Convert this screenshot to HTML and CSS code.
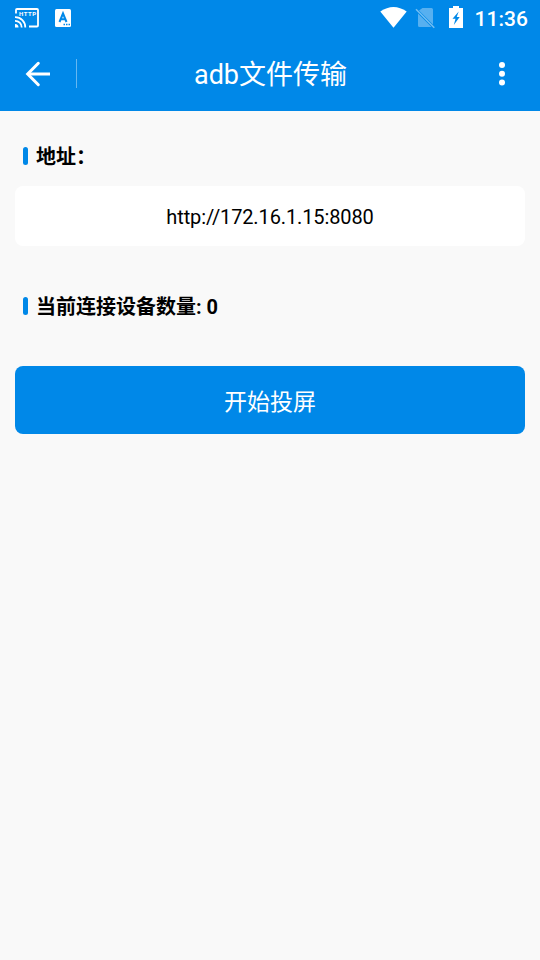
FILE: index.html
```
<!DOCTYPE html>
<html lang="zh-CN">
<head>
<meta charset="utf-8">
<title>adb文件传输</title>
<link rel="stylesheet" href="styles.css">
</head>
<body>
<header class="top">
  <div class="status">
    <svg class="cast" width="26" height="22" viewBox="0 0 26 22" fill="none" stroke="#fff" stroke-width="1.8">
      <path d="M2 6.500V3Q2 2 3 2H23Q24 2 24 3V18.500Q24 19.500 23 19.500H15"/>
      <path d="M1 10.200A10 10 0 0 1 11.300 20.500M1 13.800A6.600 6.600 0 0 1 7.700 20.500" stroke-width="1.800"/>
      <path d="M1 17A3.500 3.500 0 0 1 4.500 20.500H1Z" fill="#fff" stroke="none"/>
      <text x="5" y="8.900" class="http" textLength="17">HTTP</text>
    </svg>
    <svg class="keyboard" width="16" height="18" viewBox="0 0 16 18">
      <rect width="16" height="18" rx="1.500" fill="#fff"/>
      <path d="M4.500 13L8 4.500L11.500 13M6 10.300H10" fill="none" stroke="#0088e8" stroke-width="2"/>
      <path d="M8.500 15.500H15" stroke="#0088e8" stroke-width="1.300" stroke-dasharray="1.500 1"/>
    </svg>
    <svg class="signals" width="84" height="24" viewBox="380 5 84 24">
      <path d="M380.300 11.500Q393.500 2.500 406.700 11.500L393.500 27.800Z" fill="#fff"/>
      <path d="M422.500 8H431.500Q433 8 433 9.500V24.500L419 10.500ZM418 13.500L431.500 27H419.500Q418 27 418 25.500Z" fill="#fff" opacity=".34"/>
      <path d="M416 9.300L434.300 27.700" stroke="#fff" stroke-width="1.500" opacity=".45"/>
      <path d="M449 8H453V6H459V8H463V28H449Z" fill="#fff"/>
      <path d="M458.700 11.500L452.500 18.700H455.500L453.800 25L459.700 17H456.700Z" fill="#0088e8"/>
    </svg>
    <span class="time">11:36</span>
  </div>
  <div class="bar">
    <svg class="back" width="26" height="26" viewBox="0 0 26 26" fill="none" stroke="#fff" stroke-width="3">
      <path d="M25 13H3"/><path d="M13.300 2.300L2.700 13L13.300 23.700" stroke-linecap="round"/>
    </svg>
    <i class="divider"></i>
    <h1>adb文件传输</h1>
    <svg class="more" width="6" height="24" viewBox="0 0 6 24" fill="#fff">
      <circle cx="3" cy="3" r="3"/><circle cx="3" cy="11.700" r="3"/><circle cx="3" cy="20.400" r="3"/>
    </svg>
  </div>
</header>
<main>
  <h2><span>地址：</span></h2>
  <div class="url">http://172.16.1.15:8080</div>
  <h2 class="devices"><span>当前连接设备数量: 0</span></h2>
  <button>开始投屏</button>
</main>
</body>
</html>
```
FILE: styles.css
```
* { box-sizing: border-box; }
body {
  margin: 0;
  min-height: 960px;
  background: #f9f9f9;
  color: #000;
  font-family: Roboto, "Noto Sans CJK SC", sans-serif;
}
svg { display: block; flex: none; }
.top { height: 111px; background: #0088e8; color: #fff; }
.status { display: flex; height: 36px; padding: 0 12px 0 14px; }
.cast { margin-top: 7px; }
.http { font: 700 6px Roboto, sans-serif; fill: #fff; stroke: none; }
.keyboard { margin: 9px 0 0 15px; }
.signals { margin: 5px 0 0 auto; }
.time { margin-left: 10px; font-size: 21px; font-weight: 500; line-height: 38px; letter-spacing: .05px; }
.bar {
  display: grid;
  grid-template-columns: 26px 1px 1fr 6px;
  align-items: center;
  height: 75px;
  padding: 0 35px 0 25px;
}
.divider { justify-self: end; width: 1px; height: 29px; margin-right: -25px; background: rgba(255,255,255,.4); }
h1 { margin: 0 0 0 -17px; padding: 2px 0 0 7px; font-size: 27px; line-height: 40px; font-weight: 400; text-align: center; }
main { padding: 30px 15px; }
h2 {
  display: flex;
  align-items: center;
  height: 30px;
  margin: 0;
  padding-left: 8px;
  font-size: 20px;
  font-weight: 700;
}
h2 span { padding-bottom: 2px; }
h2::before { content: ""; width: 5px; height: 18px; margin-right: 8px; border-radius: 2.5px; background: #0088e8; }
.url {
  height: 60px;
  margin-top: 15px;
  border-radius: 8px;
  background: #fff;
  font-size: 20px;
  line-height: 62px;
  letter-spacing: -.12px;
  text-align: center;
}
.devices { margin-top: 45px; }
button {
  display: block;
  width: 100%;
  height: 68px;
  margin-top: 45px;
  padding: 0;
  border: 0;
  border-radius: 8px;
  background: #0088e8;
  color: #fff;
  font: 400 23px Roboto, "Noto Sans CJK SC", sans-serif;
}
```
